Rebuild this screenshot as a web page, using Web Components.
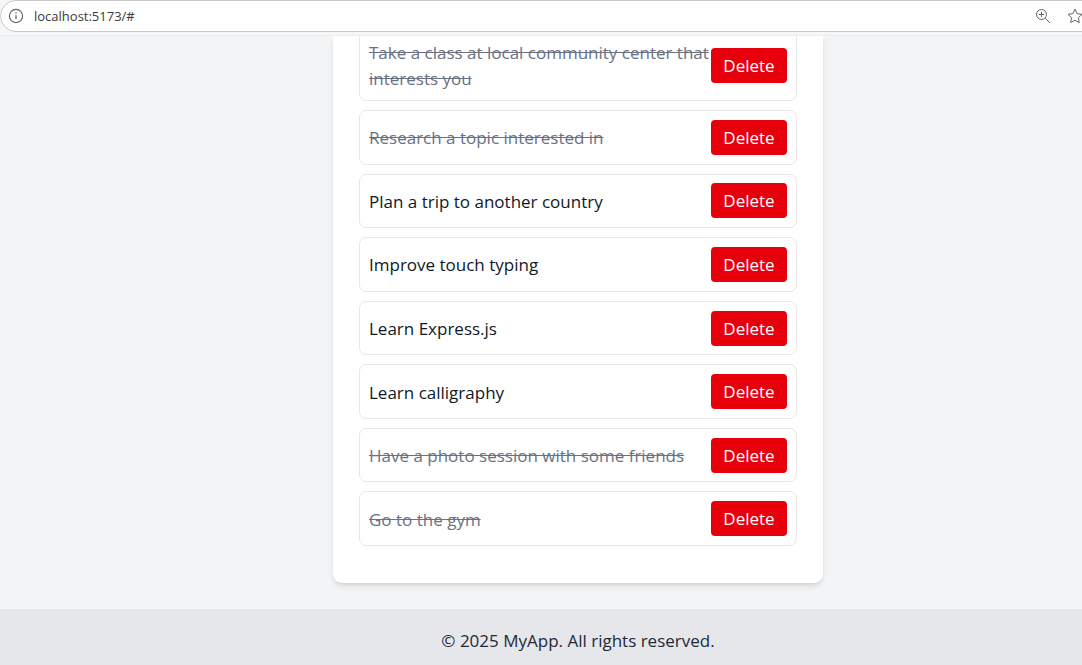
<!DOCTYPE html>
<html lang="en">
<head>
<meta charset="utf-8">
<title>MyApp</title>
<style>
  body { margin: 0; font-family: "Open Sans", "Noto Sans", sans-serif; font-size: 17px; line-height: 26px; color: #1e2939; background: #f3f4f6; }
</style>
</head>
<body>
<my-app></my-app>
<script>
const define = (name, html) => {
  const template = document.createElement("template");
  template.innerHTML = html;
  customElements.define(name, class extends HTMLElement {
    constructor() {
      super();
      this.attachShadow({ mode: "open" }).append(template.content.cloneNode(true));
    }
  });
};

define("address-bar", `
<style>
  :host { display: block; position: relative; z-index: 1; background: #f7f7f7; border-bottom: 1px solid #ececee; box-sizing: border-box; height: 36px; overflow: hidden; }
  form { display: flex; align-items: center; height: 32px; margin: 0 -24px 0 0; box-sizing: border-box; border: 1px solid #c9c9c9; border-radius: 16px; background: #fff; padding: 0 22px 0 7px; gap: 16px; }
  button { display: flex; border: 0; padding: 0; background: none; }
  svg { display: block; width: 16px; height: 16px; fill: none; stroke: #666; stroke-width: 1; }
  input { flex: 1; min-width: 0; border: 0; outline: 0; padding: 0; margin-left: -6px; background: none; font: inherit; font-size: 13px; line-height: 20px; color: #3a3a3a; }
</style>
<form>
  <button type="button" aria-label="Site information"><svg viewBox="0 0 16 16"><circle cx="8" cy="8" r="6.6" stroke-width="1.2"/><path d="M8 7.2v4" stroke-width="1.3"/><circle cx="8" cy="5" r=".8" fill="#666" stroke="none"/></svg></button>
  <input type="text" aria-label="Address" value="localhost:5173/#">
  <button type="button" aria-label="Zoom"><svg viewBox="0 0 16 16"><circle cx="6.5" cy="6.5" r="5"/><path d="M10.2 10.2 15 15M6.5 3.8v5.4M3.8 6.5h5.4"/></svg></button>
  <button type="button" aria-label="Add to favorites"><svg viewBox="0 0 16 16"><path d="M8 1.2 10.1 5.7 15 6.3 11.4 9.7 12.3 14.6 8 12.2 3.7 14.6 4.6 9.7 1 6.3 5.9 5.7Z" stroke-linejoin="round"/></svg></button>
</form>`);

define("todo-item", `
<style>
  :host { display: flex; align-items: center; justify-content: space-between; flex: 1 0 auto; box-sizing: border-box; border: 1px solid #e5e7eb; border-radius: 7px; padding: 8px 9px; color: #101828; }
  :host([done]) { color: #6a7282; }
  :host([done]) span { text-decoration: line-through; }
  :host([tall]) { flex: none; }
  span { padding-top: 2px; }
  button { flex: none; width: 76px; height: 35px; border: 0; border-radius: 4px; padding: 1px 0 0; background: #e7000b; color: #fff; font: inherit; }
</style>
<span><slot></slot></span>
<button type="button">Delete</button>`);

define("todo-card", `
<style>
  :host { display: flex; flex-direction: column; box-sizing: border-box; width: 490px; padding: 0 26px 37px; background: #fff; border-radius: 0 0 9px 9px; box-shadow: 0 4px 6px -1px rgb(0 0 0 / .1), 0 2px 4px -2px rgb(0 0 0 / .1); }
  div { flex: 1; display: flex; flex-direction: column; gap: 9px; margin-top: -7px; }
</style>
<div><slot></slot></div>`);

define("page-footer", `
<style>
  :host { display: block; background: #e5e7eb; padding: 19px 0 11px; text-align: center; }
</style>
<slot></slot>`);

define("my-app", `
<style>
  :host { display: flex; flex-direction: column; min-height: 100vh; overflow: hidden; }
  main { flex: 1; display: flex; justify-content: center; padding: 0 0 26px 74px; }
  page-footer { padding-left: 74px; }
</style>
<address-bar></address-bar>
<main>
  <todo-card>
    <todo-item done tall>Take a class at local community center that interests you</todo-item>
    <todo-item done>Research a topic interested in</todo-item>
    <todo-item>Plan a trip to another country</todo-item>
    <todo-item>Improve touch typing</todo-item>
    <todo-item>Learn Express.js</todo-item>
    <todo-item>Learn calligraphy</todo-item>
    <todo-item done>Have a photo session with some friends</todo-item>
    <todo-item done>Go to the gym</todo-item>
  </todo-card>
</main>
<page-footer>© 2025 MyApp. All rights reserved.</page-footer>`);
</script>
</body>
</html>
